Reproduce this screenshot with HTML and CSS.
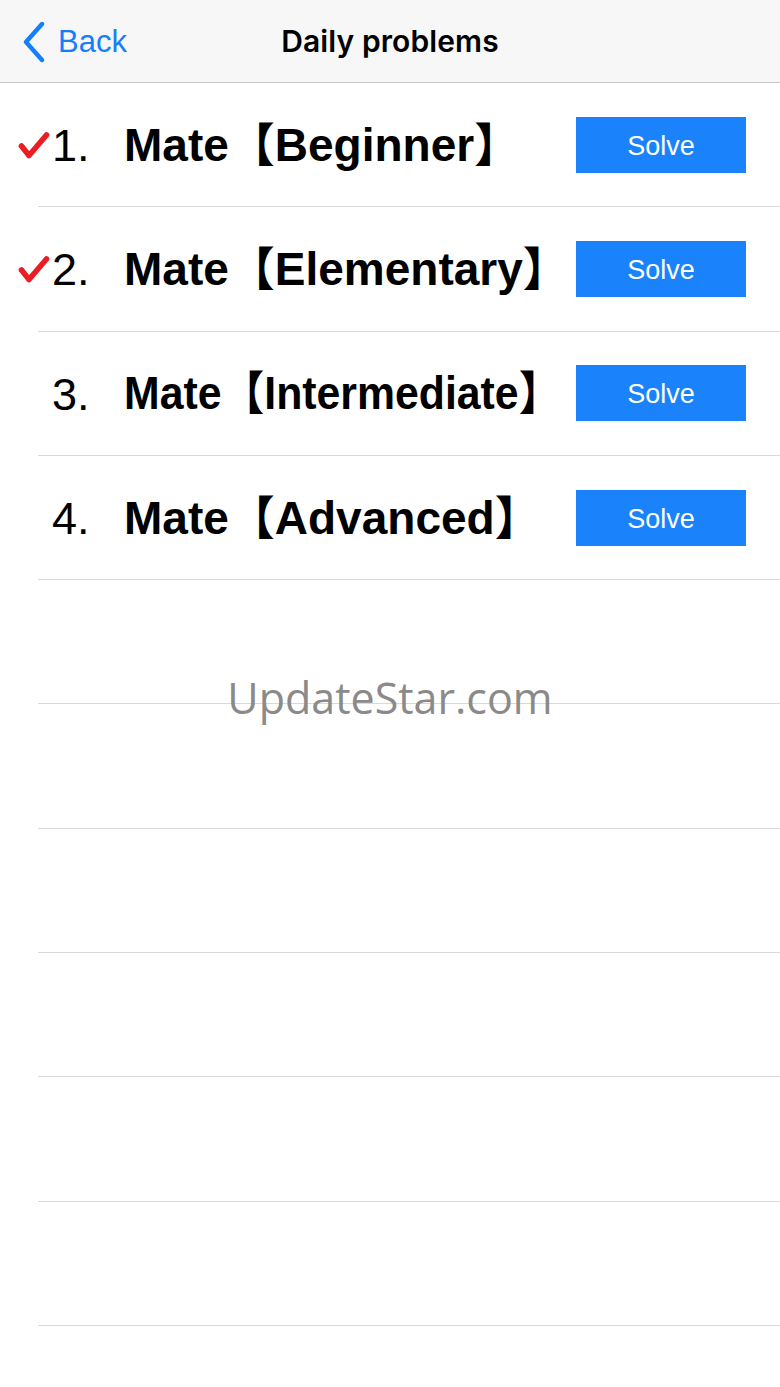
FILE: index.html
```html
<!DOCTYPE html>
<html>
<head>
<meta charset="utf-8">
<link rel="stylesheet" href="styles.css">
</head>
<body>
<div class="screen">
  <header class="nav">
    <div class="back">
      <svg class="chev" width="28" height="42" viewBox="0 0 28 42"><path d="M22 3 L6 21 L22 39" fill="none" stroke="#157efb" stroke-width="4.4" stroke-linecap="round" stroke-linejoin="round"/></svg>
      <span class="back-label">Back</span>
    </div>
    <div class="title">Daily problems</div>
  </header>
  <ul class="list">
    <li class="row">
      <span class="check"><svg width="32" height="30" viewBox="0 0 32 30"><path d="M3.5 15 L11 24.5 L28.5 4" fill="none" stroke="#ec1c24" stroke-width="5.6" stroke-linecap="round" stroke-linejoin="round"/></svg></span>
      <span class="num">1.</span>
      <span class="name">Mate【Beginner】</span>
      <span class="btn">Solve</span>
    </li>
    <li class="row">
      <span class="check"><svg width="32" height="30" viewBox="0 0 32 30"><path d="M3.5 15 L11 24.5 L28.5 4" fill="none" stroke="#ec1c24" stroke-width="5.6" stroke-linecap="round" stroke-linejoin="round"/></svg></span>
      <span class="num">2.</span>
      <span class="name">Mate【Elementary】</span>
      <span class="btn">Solve</span>
    </li>
    <li class="row">
      <span class="check"></span>
      <span class="num">3.</span>
      <span class="name tight">Mate【Intermediate】</span>
      <span class="btn">Solve</span>
    </li>
    <li class="row">
      <span class="check"></span>
      <span class="num">4.</span>
      <span class="name">Mate【Advanced】</span>
      <span class="btn">Solve</span>
    </li>
    <li class="row"></li>
    <li class="row"></li>
    <li class="row"></li>
    <li class="row"></li>
    <li class="row"></li>
    <li class="row"></li>
  </ul>
  <div class="watermark">UpdateStar.com</div>
</div>
</body>
</html>
```

FILE: styles.css
```css
* { box-sizing: border-box; }
html, body { margin: 0; padding: 0; background: #fff; }
body { font-family: "Liberation Sans", Arial, "Noto Sans CJK JP", sans-serif; }
.screen { position: relative; width: 780px; height: 1387px; overflow: hidden; background: #fff; }

.nav {
  position: relative;
  height: 83px;
  background: #f7f7f7;
  border-bottom: 1px solid #c8c8cc;
  display: flex;
  align-items: center;
  justify-content: center;
}
.back {
  position: absolute;
  left: 20px;
  top: 21px;
  display: flex;
  align-items: center;
  gap: 10px;
  color: #157efb;
}
.back-label { font-size: 31px; }
.title { font-size: 30px; font-weight: 600; color: #000; font-family: "Inter", "Liberation Sans", sans-serif; letter-spacing: 0.1px; }

.list { list-style: none; margin: 0; padding: 0; }
.row {
  height: 124.3px;
  margin-left: 38px;
  border-bottom: 1px solid #d9d9dc;
  display: flex;
  align-items: center;
}
.check { width: 34px; flex-shrink: 0; margin-left: -20px; display: flex; align-items: center; padding-top: 2px; }
.num { width: 72px; flex-shrink: 0; font-size: 45px; line-height: 1; color: #000; padding-top: 2px; }
.name {
  flex: 1;
  min-width: 0;
  font-size: 46px;
  line-height: 1;
  font-weight: bold;
  color: #000;
  font-family: "Liberation Sans", "Noto Sans CJK JP", sans-serif;
  white-space: nowrap;
}
.tight { transform: scaleX(0.93); transform-origin: left center; }
.btn {
  flex-shrink: 0;
  width: 170px;
  height: 56px;
  margin-right: 34px;
  background: #1a82fb;
  color: #fff;
  font-size: 27px;
  padding-top: 3px;
  display: flex;
  align-items: center;
  justify-content: center;
}

.watermark {
  position: absolute;
  left: 0;
  right: 0;
  top: 668px;
  text-align: center;
  font-family: "Open Sans", "Noto Sans", sans-serif;
  font-size: 43px;
  color: #8a8a8a;
}
```
